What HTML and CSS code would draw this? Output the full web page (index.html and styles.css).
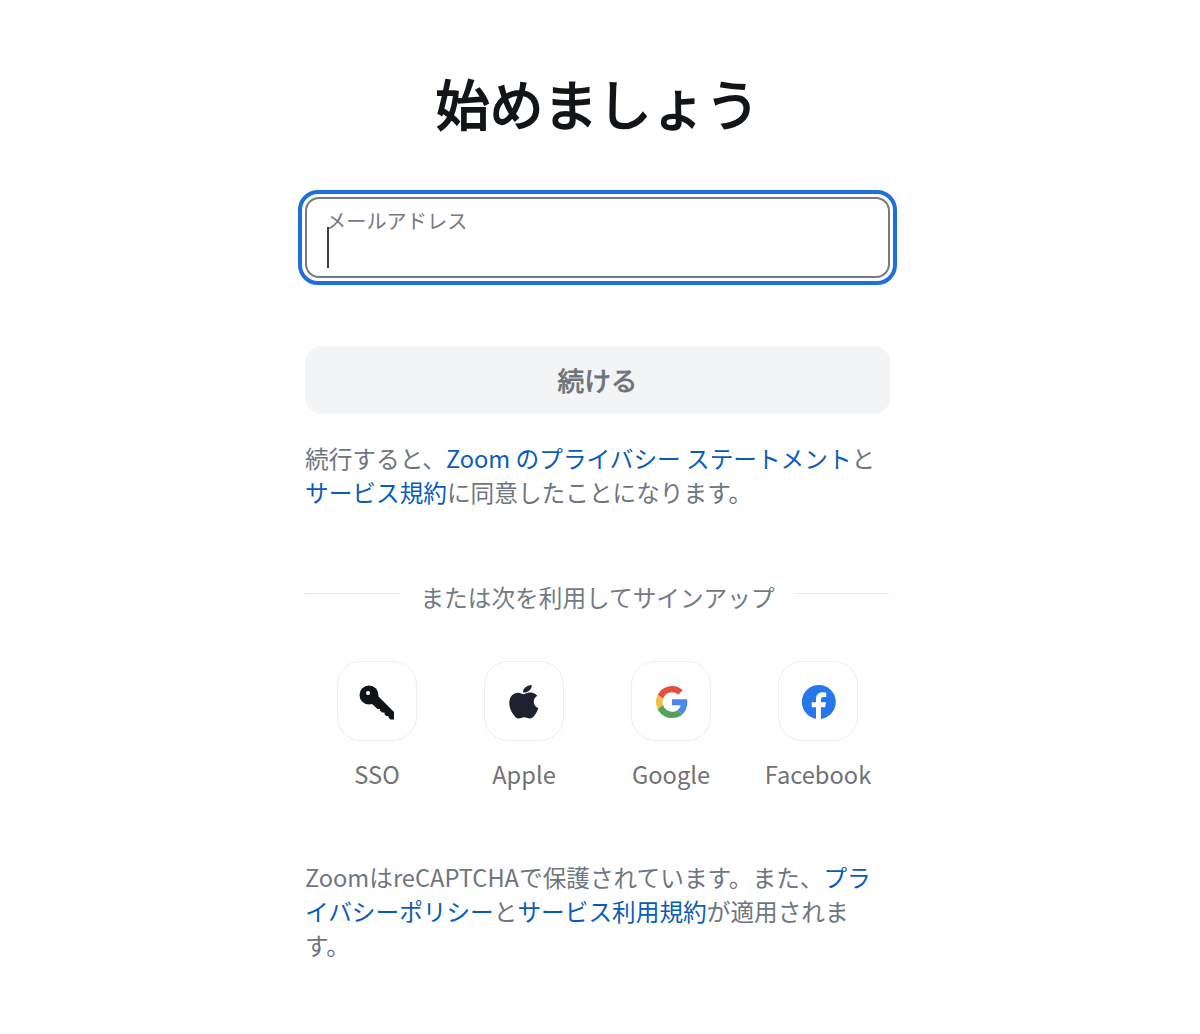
FILE: index.html
```html
<!DOCTYPE html>
<html lang="ja">
<head>
  <meta charset="UTF-8">
  <title>始めましょう</title>
  <link rel="stylesheet" href="styles.css">
</head>
<body>
  <main class="signup">
    <h1 class="title">始めましょう</h1>

    <div class="field-ring">
      <label class="field">
        <span class="field-label">メールアドレス</span>
        <span class="caret"></span>
      </label>
    </div>

    <button class="continue" type="button">続ける</button>

    <p class="note terms">続行すると、<a href="#">Zoom のプライバシー ステートメント</a>と<br><a href="#">サービス規約</a>に同意したことになります。</p>

    <div class="divider">
      <span class="divider-line"></span>
      <span class="divider-text">または次を利用してサインアップ</span>
      <span class="divider-line"></span>
    </div>

    <div class="providers">
      <a class="provider" href="#">
        <span class="provider-icon">
          <svg width="36" height="36" viewBox="0 0 36 36">
            <path fill="#111417" d="M18 11L35 28V35.500H31.500L29.500 33.500V32H27L25.500 30V28.500H23L21 26.500V25H18.500L12 19z"/>
            <circle cx="10" cy="11" r="9.500" fill="#111417"/>
            <circle cx="9" cy="9" r="2" fill="#fff"/>
          </svg>
        </span>
        <span class="provider-name">SSO</span>
      </a>
      <a class="provider" href="#">
        <span class="provider-icon">
          <svg width="36" height="36" viewBox="0 0 36 36">
            <path fill="#1f2130" transform="translate(-5.900 1) scale(1.300 1)" d="M24.300 0c.2 2.200-.6 4-1.700 5.300-1.200 1.400-3 2.500-5 2.300-.2-2 .7-4 1.800-5.200C20.600 1 22.500.1 24.300 0z"/>
            <path fill="#1f2130" transform="translate(-3.740 -1.450) scale(1.100 1.080)" d="M31.800 12.300c-2 1.300-3.200 3.200-3.200 5.500 0 2.700 1.500 4.800 4.200 5.900-.8 2.300-1.700 4.300-3.200 6.300-1.300 1.800-2.600 3.400-4.600 3.400-1.900 0-2.700-1.200-5-1.200-2.400 0-3.300 1.200-5.100 1.200-2 0-3.300-1.700-4.800-3.800C8 26.900 6.400 22.700 6.400 18.900c0-6.200 4-9.500 8-9.500 2.100 0 3.800 1.400 5.100 1.400 1.300 0 3.200-1.500 5.600-1.500 1.500 0 4.500.4 6.700 3z"/>
          </svg>
        </span>
        <span class="provider-name">Apple</span>
      </a>
      <a class="provider" href="#">
        <span class="provider-icon">
          <svg class="google-mark" width="32" height="32" viewBox="0 0 48 48">
            <path fill="#E0523F" d="M24 9.500c3.500 0 6.700 1.200 9.200 3.600l6.900-6.900C35.900 2.400 30.500 0 24 0 14.600 0 6.500 5.400 2.600 13.200l8 6.200C12.400 13.700 17.700 9.500 24 9.500z"/>
            <path fill="#4A88EE" d="M47 24.500c0-1.600-.1-3.100-.4-4.500H24v9h12.900c-.6 3-2.200 5.500-4.700 7.200l7.700 6C44.400 38 47 31.900 47 24.500z"/>
            <path fill="#F5BF42" d="M10.500 28.600c-.5-1.500-.8-3-.8-4.600s.3-3.200.8-4.600l-8-6.200C.9 16.500 0 20.100 0 24s.9 7.500 2.600 10.800l7.900-6.200z"/>
            <path fill="#4FA35A" d="M24 48c6.500 0 11.900-2.100 15.900-5.800l-7.700-6c-2.200 1.500-4.900 2.300-8.200 2.300-6.300 0-11.600-4.200-13.500-9.900l-8 6.200C6.500 42.600 14.600 48 24 48z"/>
          </svg>
        </span>
        <span class="provider-name">Google</span>
      </a>
      <a class="provider" href="#">
        <span class="provider-icon">
          <svg width="36" height="36" viewBox="0 0 36 36">
            <circle cx="18.800" cy="18" r="17" fill="#2678ea"/>
            <path fill="#fff" transform="translate(.8 0)" d="M15.200 35v-11.700h-4.300V18.300h4.300v-2.800c0-4.800 2.500-7.200 6.800-7.200 1.300 0 2.700.2 3.400.4v4.400h-2.400c-2.200 0-2.900 1.100-2.900 2.800v2.400h5.100l-.8 5h-4.300V35z"/>
          </svg>
        </span>
        <span class="provider-name">Facebook</span>
      </a>
    </div>

    <p class="note recaptcha">ZoomはreCAPTCHAで保護されています。また、<a href="#">プラ<br>イバシーポリシー</a>と<a href="#">サービス利用規約</a>が適用されま<br>す。</p>
  </main>
</body>
</html>
```

FILE: styles.css
```css
* {
    box-sizing: border-box;
}
body {
    margin: 0;
    background-color: white;
    font-family: "Noto Sans CJK JP", sans-serif;
    color: #6e7680;
}
a {
    color: #0b5cb8;
    text-decoration: none;
}
.signup {
    width: 585px;
    margin-left: 305px;
    padding-top: 65px;
}
.title {
    margin: 0;
    font-size: 54px;
    line-height: 76px;
    font-weight: 400;
    -webkit-text-stroke: 1.800px #131619;
    color: #131619;
    text-align: center;
}
.field-ring {
    margin: 49px -7px 0;
    padding: 3px;
    border: 4px solid #1f70dc;
    border-radius: 20px;
}
.field {
    display: block;
    position: relative;
    height: 81px;
    border: 2px solid #757b83;
    border-radius: 14px;
}
.field-label {
    position: absolute;
    left: 19px;
    top: 7px;
    font-size: 20.200px;
    line-height: 30px;
    color: #747a80;
}
.caret {
    position: absolute;
    left: 20px;
    top: 28px;
    width: 2px;
    height: 41px;
    background-color: #404040;
}
.continue {
    display: block;
    width: 100%;
    height: 68px;
    margin-top: 61px;
    padding-bottom: 2px;
    border: 0;
    border-radius: 16px;
    background-color: #f2f4f6;
    font-family: inherit;
    font-size: 26.700px;
    font-weight: 400;
    -webkit-text-stroke: .8px #6e7278;
    color: #6e7278;
}
.note {
    margin: 0;
    font-size: 23.670px;
    line-height: 34px;
}
.terms {
    margin-top: 27px;
}
.divider {
    display: flex;
    align-items: center;
    gap: 20px;
    margin-top: 71px;
}
.divider-line {
    flex: 1;
    height: 1px;
    margin-top: -8px;
    background-color: #e6e8eb;
}
.divider-text {
    font-size: 23.670px;
    line-height: 34px;
    color: #747a84;
}
.providers {
    display: flex;
    justify-content: center;
    margin-top: 47px;
}
.provider {
    display: flex;
    flex: 0 0 147px;
    flex-direction: column;
    align-items: center;
    color: #6e7278;
}
.provider-icon {
    display: flex;
    align-items: center;
    justify-content: center;
    width: 80px;
    height: 80px;
    padding-top: 2px;
    border: 1px solid #eceef0;
    border-radius: 24px;
}
.google-mark {
    margin-left: 2px;
}
.provider-name {
    margin-top: 15px;
    font-size: 23.670px;
    line-height: 36px;
}
.recaptcha {
    margin-top: 68px;
}
```
